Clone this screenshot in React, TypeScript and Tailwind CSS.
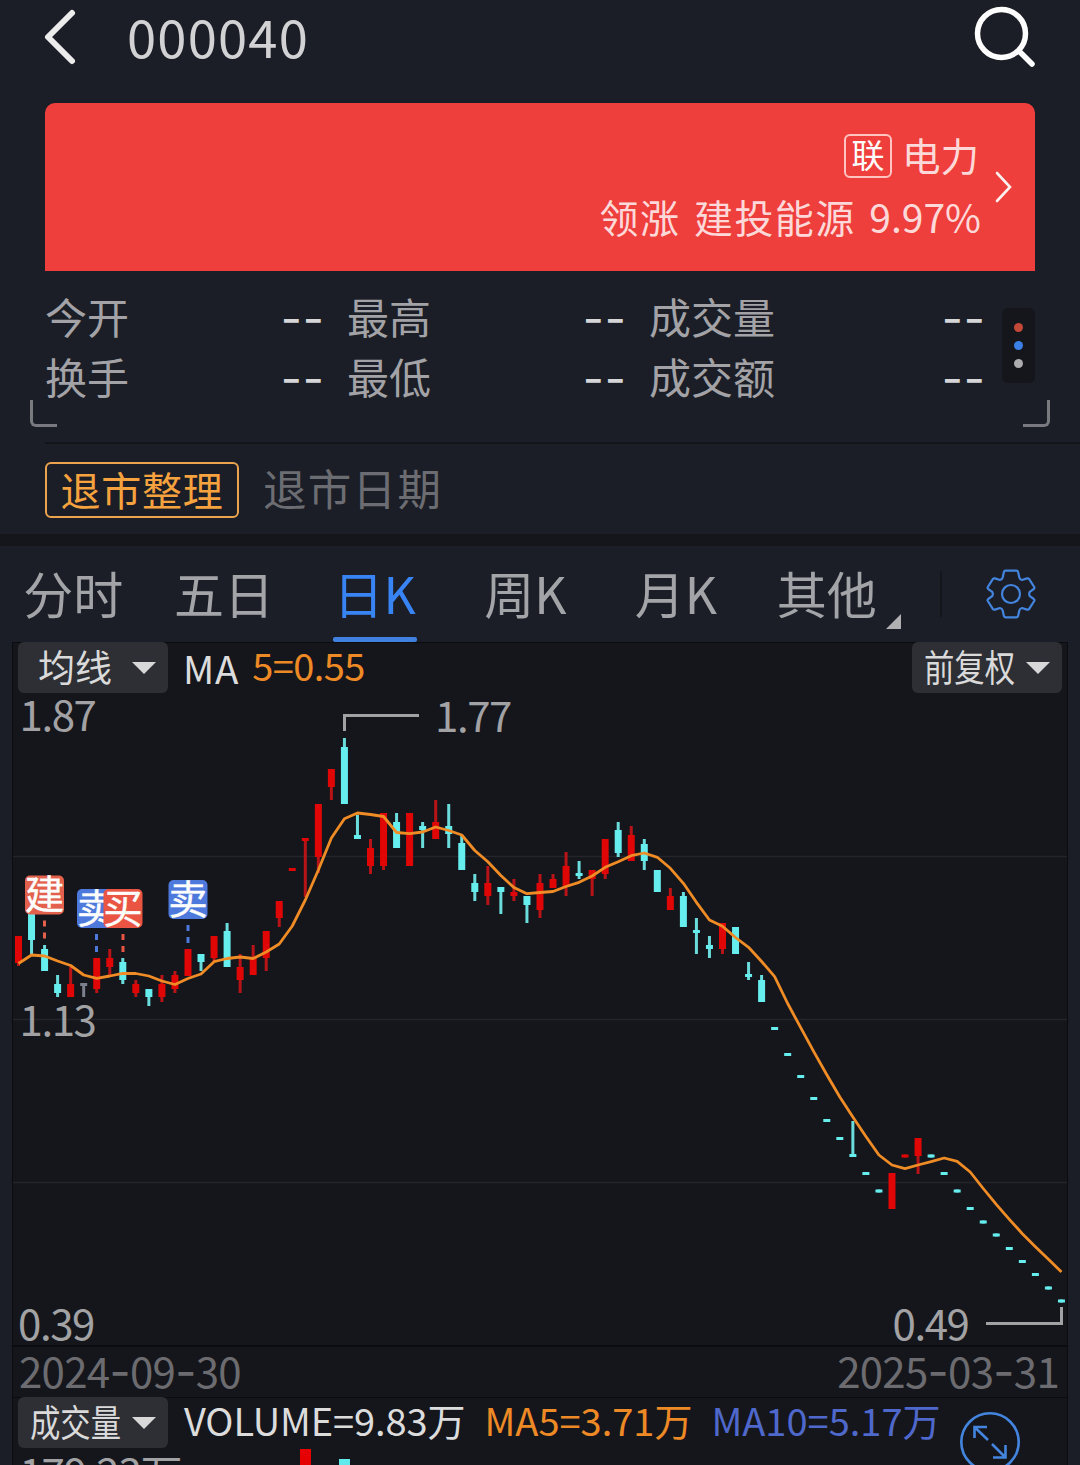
import React from "react";

type Tone = "up" | "down" | "flat";

// [tone, high, low, bodyTop, bodyBottom] in chart coordinates
type Candle = [Tone, number, number, number, number];

const candles: Candle[] = [
  ["up", 936, 966, 936, 963],
  ["down", 905, 954, 905, 940],
  ["down", 945, 971, 949, 971],
  ["down", 975, 997, 984, 993],
  ["up", 967, 997, 984, 997],
  ["flat", 983, 997, 983, 986],
  ["up", 958, 993, 958, 989],
  ["up", 949, 975, 958, 967],
  ["down", 958, 984, 962, 980],
  ["up", 980, 997, 984, 993],
  ["down", 989, 1006, 989, 997],
  ["up", 975, 1002, 984, 997],
  ["up", 971, 993, 975, 989],
  ["up", 949, 976, 949, 976],
  ["down", 954, 971, 954, 962],
  ["up", 936, 962, 936, 958],
  ["down", 923, 967, 931, 967],
  ["up", 954, 993, 967, 980],
  ["up", 945, 975, 958, 975],
  ["up", 931, 971, 931, 958],
  ["up", 901, 927, 901, 918],
  ["up", 868, 871, 868, 871],
  ["up", 838, 897, 838, 841],
  ["up", 804, 873, 804, 857],
  ["up", 769, 800, 769, 787],
  ["down", 738, 804, 747, 804],
  ["down", 815, 839, 835, 839],
  ["up", 839, 874, 848, 866],
  ["up", 813, 870, 813, 866],
  ["down", 813, 848, 822, 848],
  ["up", 813, 866, 813, 866],
  ["down", 822, 848, 826, 830],
  ["up", 800, 839, 822, 839],
  ["down", 804, 848, 826, 834],
  ["down", 835, 870, 843, 870],
  ["down", 874, 901, 883, 892],
  ["up", 866, 905, 883, 896],
  ["down", 887, 914, 887, 892],
  ["up", 879, 901, 892, 896],
  ["down", 896, 923, 896, 905],
  ["up", 874, 918, 883, 910],
  ["up", 874, 888, 879, 888],
  ["up", 852, 896, 866, 887],
  ["down", 861, 879, 873, 876],
  ["up", 870, 896, 870, 879],
  ["up", 839, 879, 839, 874],
  ["down", 822, 857, 830, 853],
  ["up", 826, 861, 835, 861],
  ["down", 839, 870, 844, 861],
  ["down", 870, 892, 870, 892],
  ["up", 888, 910, 896, 910],
  ["down", 892, 927, 896, 927],
  ["down", 918, 954, 930, 933],
  ["down", 936, 958, 945, 949],
  ["up", 923, 954, 923, 949],
  ["down", 927, 954, 927, 954],
  ["down", 962, 980, 974, 977],
  ["down", 975, 1002, 980, 1002],
  ["down", 1027, 1030, 1027, 1030],
  ["down", 1053, 1056, 1053, 1056],
  ["down", 1075, 1078, 1075, 1078],
  ["down", 1097, 1100, 1097, 1100],
  ["down", 1119, 1122, 1119, 1122],
  ["down", 1137, 1140, 1137, 1140],
  ["down", 1121, 1157, 1154, 1157],
  ["down", 1172, 1175, 1172, 1175],
  ["down", 1189.5, 1192.5, 1189.5, 1192.5],
  ["up", 1173, 1209, 1173, 1209],
  ["up", 1154.5, 1157.5, 1154.5, 1157.5],
  ["up", 1138, 1174, 1138, 1156],
  ["down", 1154.5, 1157.5, 1154.5, 1157.5],
  ["down", 1172, 1175, 1172, 1175],
  ["down", 1189.5, 1192.5, 1189.5, 1192.5],
  ["down", 1207, 1210, 1207, 1210],
  ["down", 1220.5, 1223.5, 1220.5, 1223.5],
  ["down", 1233.5, 1236.5, 1233.5, 1236.5],
  ["down", 1247, 1250, 1247, 1250],
  ["down", 1260, 1263, 1260, 1263],
  ["down", 1273, 1276, 1273, 1276],
  ["down", 1286.5, 1289.5, 1286.5, 1289.5],
  ["down", 1299.5, 1302.5, 1299.5, 1302.5],
];

const ma5 = [
  963.5, 955, 956, 961, 965.5, 975, 978.3, 976, 973.3, 973.5, 976, 981, 984.5,
  978.5, 974, 961.7, 958.5, 957, 958.5, 952, 944, 926, 900, 870, 838, 818.7,
  813, 814.5, 816.5, 832.5, 833.7, 832, 827, 830.5, 835, 850.5, 861.7, 875.5,
  887.5, 893.7, 892.5, 891.5, 886.5, 882.3, 876, 867.3, 861.7, 855.7, 853,
  857.3, 868.3, 883.3, 902.3, 920, 926.3, 937.5, 947.3, 961.5, 976.6, 1003.5,
  1027.7, 1051.7, 1074.7, 1097, 1117, 1136.5, 1155, 1165, 1168.7, 1165, 1161.7,
  1158, 1161.3, 1172, 1188.5, 1204.3, 1219.3, 1233.7, 1246.7, 1259.3, 1272,
];

const xAt = (i: number) => 18.5 + i * 13.037;

const bodyColors = { up: "#e00606", down: "#66eeee", flat: "#7c7f8c" };
const wickColors = { up: "#b81418", down: "#6adcdc", flat: "#7c7f8c" };

const trades = [
  { label: "建", x: 25, y: 875.5, line: 44.5, color: "#e2604c" },
  { label: "卖", x: 77, y: 889, line: 96.5, color: "#4d79dd" },
  { label: "买", x: 103.5, y: 889, line: 123, color: "#ea5443" },
  { label: "卖", x: 168.5, y: 880, line: 188, color: "#4d79dd" },
];

const stats = [
  ["今开", "最高", "成交量"],
  ["换手", "最低", "成交额"],
];

const tabs = ["分时", "五日", "日K", "周K", "月K", "其他"];

function Header() {
  return (
    <header className="flex h-[74px] items-center pr-[42px] pl-[42px]">
      <svg width="36" height="60" viewBox="42 7 36 60" fill="none">
        <path
          d="M72 13L48 37L72 61"
          stroke="#ececec"
          strokeWidth="6"
          strokeLinecap="round"
          strokeLinejoin="round"
        />
      </svg>
      <h1 className="ml-[49px] -mt-[4px] text-[52.5px] leading-[66px] tracking-[1.2px] text-[#d2d2d4]">
        000040
      </h1>
      <svg
        className="ml-auto"
        width="66"
        height="66"
        viewBox="972 4 66 66"
        fill="none"
        stroke="#ffffff"
      >
        <circle cx="1001.5" cy="33.5" r="24" strokeWidth="5.5" />
        <path d="M1019 51L1032 64" strokeWidth="5.5" strokeLinecap="round" />
      </svg>
    </header>
  );
}

function SectorCard() {
  return (
    <section className="mx-[45px] mt-[29px] flex h-[168px] items-center justify-end rounded-t-[10px] bg-[#ef3f3d] pr-[21px] text-[#ffd9d9]">
      <div className="flex flex-col items-end pb-[3px]">
        <div className="flex h-[60px] items-center gap-[10px]">
          <span className="flex h-[44px] w-[48px] items-center justify-center rounded-[6px] border-2 border-[#ffc4c2] text-[33px] leading-[36px] text-white">
            <span className="-mt-[3px]">联</span>
          </span>
          <span className="-mt-[3px] mr-[2px] text-[38.5px] leading-[56px]">
            电力
          </span>
        </div>
        <p className="h-[60px] text-[39px] leading-[60px] tracking-[1.4px] whitespace-pre [word-spacing:3.5px]">
          领涨 建投能源 <span className="tracking-normal">9.97%</span>
        </p>
      </div>
      <svg
        className="ml-[12px]"
        width="21"
        height="36"
        viewBox="993 169 21 36"
        fill="none"
      >
        <path
          d="M997 173L1010 187L997 201"
          stroke="#fff0f0"
          strokeWidth="2.6"
          strokeLinecap="round"
        />
      </svg>
    </section>
  );
}

function Stats() {
  return (
    <section className="flex h-[129px] items-start pt-[15px] pl-[45px]">
      <div className="flex w-[957px] flex-col">
        {stats.map((row) => (
          <div
            className="grid h-[60px] grid-cols-[302px_302px_353px] items-center text-[42px] leading-[60px] text-[#a3a3a7]"
            key={row[0]}
          >
            {row.map((label, i) => (
              <div className="flex justify-between" key={label}>
                <span>{label}</span>
                <span
                  className={`mt-[2px] font-[Inter] text-[46px] tracking-[1px] text-[#d6d6d8] ${
                    i === 2 ? "mr-[16px]" : "mr-[22px]"
                  }`}
                >
                  --
                </span>
              </div>
            ))}
          </div>
        ))}
      </div>
      <div className="mt-[22px] flex h-[75px] w-[33px] flex-col items-center justify-center gap-[9px] rounded-[6px] bg-[#15161b]">
        <span className="size-[9px] rounded-full bg-[#c24837]" />
        <span className="size-[9px] rounded-full bg-[#3b80e6]" />
        <span className="size-[9px] rounded-full bg-[#adadb0]" />
      </div>
    </section>
  );
}

function Notice() {
  return (
    <>
      <div className="flex h-[42px] justify-between px-[30px]">
        <span className="h-[27px] w-[27px] rounded-bl-[6px] border-b-3 border-l-3 border-[#797a80]" />
        <span className="h-[27px] w-[27px] rounded-br-[6px] border-r-3 border-b-3 border-[#797a80]" />
      </div>
      <div className="ml-[45px] h-[2px] bg-[#14151a]" />
      <section className="flex h-[90px] items-center pl-[45px]">
        <span className="mt-[2px] flex h-[56px] w-[194px] items-center justify-center rounded-[6px] border-2 border-[#eba34e] pb-[2px] text-[40px] leading-[50px] tracking-[0.8px] text-[#f5a23f]">
          退市整理
        </span>
        <span className="-mt-[2px] ml-[24px] text-[43.5px] leading-[60px] tracking-[1.3px] text-[#6c6d72]">
          退市日期
        </span>
      </section>
      <div className="h-[12px] bg-[#15161b]" />
    </>
  );
}

function Tabs() {
  return (
    <nav className="flex h-[96px] items-center">
      <div className="-ml-[2px] grid h-full w-[904px] grid-cols-6 text-[50px] leading-[93px] text-[#a3a4a8]">
        {tabs.map((tab) => (
          <div className="flex justify-center" key={tab}>
            {tab === "日K" ? (
              <div className="flex h-full w-[84px] flex-col text-center text-[#3884f5]">
                <span className="h-[91px]">{tab}</span>
                <span className="h-[5px] rounded-[2px] bg-[#4080df]" />
              </div>
            ) : (
              <span>{tab}</span>
            )}
            {tab === "其他" && (
              <svg
                className="mt-[68px] -mr-[24px] ml-[9px]"
                width="15"
                height="15"
              >
                <path d="M15 0V15H0Z" fill="#b0b0b3" />
              </svg>
            )}
          </div>
        ))}
      </div>
      <div className="ml-[38px] h-[46px] w-[2px] bg-[#15161b]" />
      <svg
        className="ml-[43px]"
        width="52"
        height="52"
        viewBox="-26 -26 52 52"
        fill="none"
        stroke="#4385de"
        strokeWidth="2.2"
        strokeLinejoin="round"
      >
        <path d="M-5.5 -23.3H5.5Q6.8 -23.3 7.1 -22L8.3 -16.5Q8.8 -14.5 11 -14L16 -15.6Q17.4 -16 18.2 -14.8L23.2 -7Q23.8 -5.9 22.8 -5L18.8 -2.2Q17.6 0 18.8 2.2L22.8 5Q23.8 5.9 23.2 7L18.2 14.8Q17.4 16 16 15.6L11 14Q8.8 14.5 8.3 16.5L7.1 22Q6.8 23.3 5.5 23.3H-5.5Q-6.8 23.3 -7.1 22L-8.3 16.5Q-8.8 14.5 -11 14L-16 15.6Q-17.4 16 -18.2 14.8L-23.2 7Q-23.8 5.9 -22.8 5L-18.8 2.2Q-17.6 0 -18.8 -2.2L-22.8 -5Q-23.8 -5.9 -23.2 -7L-18.2 -14.8Q-17.4 -16 -16 -15.6L-11 -14Q-8.8 -14.5 -8.3 -16.5L-7.1 -22Q-6.8 -23.3 -5.5 -23.3Z" />
        <circle r="9" />
      </svg>
    </nav>
  );
}

function Dropdown(props: { label: string }) {
  const long = props.label.length > 2;
  return (
    <button className="flex h-[51px] w-[150px] items-center justify-between rounded-[6px] bg-[#2e2f34] pr-[12px] pl-[12px] text-[37px] leading-[48px] whitespace-nowrap text-[#dadadb]">
      {long ? (
        <span className="-mt-[4px] w-[92px] origin-left scale-x-[0.82]">
          {props.label}
        </span>
      ) : (
        <span className="-mt-[4px] ml-[8px]">{props.label}</span>
      )}
      <svg width="24" height="12" className="shrink-0">
        <path d="M0 0H24L12 12Z" fill="#d8d8d9" />
      </svg>
    </button>
  );
}

function CandleChart() {
  return (
    <svg
      className="block"
      width="1054"
      height="652"
      viewBox="13 693 1054 652"
      fontSize="42"
    >
      {[856.5, 1019.5, 1182.5].map((y) => (
        <path key={y} d={`M13 ${y}H1067`} stroke="#24252a" strokeWidth="1.5" />
      ))}
      {candles.map(([tone, high, low, top, bottom], i) => (
        <g key={i}>
          <rect
            x={xAt(i) - 1.5}
            y={high}
            width="3"
            height={low - high}
            fill={wickColors[tone]}
          />
          <rect
            x={xAt(i) - 3.5}
            y={top}
            width="7"
            height={bottom - top}
            fill={bodyColors[tone]}
          />
        </g>
      ))}
      <polyline
        points={ma5.map((y, i) => `${xAt(i)},${y}`).join(" ")}
        fill="none"
        stroke="#f08c26"
        strokeWidth="2.8"
        strokeLinejoin="round"
      />
      {trades.map((trade) => (
        <g key={trade.x}>
          <path
            d={`M${trade.line} ${trade.y + 45}v6m0 6v6`}
            stroke={trade.color}
            strokeWidth="3"
          />
          <rect
            x={trade.x}
            y={trade.y}
            width="39"
            height="39"
            rx="5"
            fill={trade.color}
          />
          <text
            x={trade.x + 19.5}
            y={trade.y + 33.5}
            fontSize="39.5"
            textAnchor="middle"
            fill="#ffffff"
            stroke="#ffffff"
            strokeWidth="0.4"
          >
            {trade.label}
          </text>
        </g>
      ))}
      <g fill="#a2a2a5" letterSpacing="-1.4">
        <text x="19.5" y="731">
          1.87
        </text>
        <text x="435" y="731.5">
          1.77
        </text>
        <text x="19.5" y="1036">
          1.13
        </text>
        <text x="18" y="1340">
          0.39
        </text>
        <text x="892.5" y="1340">
          0.49
        </text>
      </g>
      <g fill="none" stroke="#a2a2a5" strokeWidth="3">
        <path d="M344.5 731V715.5H419" />
        <path d="M986 1323.5H1061.5V1307" />
      </g>
    </svg>
  );
}

function DateLabel(props: { date: string }) {
  const [year, month, day] = props.date.split("-");
  const dash = <span className="font-[Inter] text-[46px]">-</span>;
  return (
    <span className="-mt-[3px] leading-[50px] tracking-[-0.7px]">
      {year}
      {dash}
      {month}
      {dash}
      {day}
    </span>
  );
}

export default function App() {
  return (
    <div className="flex h-[1465px] w-[1080px] flex-col overflow-hidden bg-[#1b1e26] font-['Noto_Sans_CJK_SC',sans-serif]">
      <Header />
      <SectorCard />
      <Stats />
      <Notice />
      <Tabs />
      <main className="mx-[12px] flex grow flex-col border-x border-[#0b0c10] bg-[#15161b]">
        <div className="flex h-[51px] items-center pr-[5px] pl-[5px] shadow-[inset_0_1px_0_#0b0c10]">
          <Dropdown label="均线" />
          <span className="-mt-[2px] ml-[15px] text-[38.5px] leading-[50px] tracking-[0.8px] text-[#dcdcdd]">
            MA
          </span>
          <span className="-mt-[5px] ml-[13px] text-[38px] leading-[50px] tracking-[-0.6px] text-[#ee8a26]">
            5=0.55
          </span>
          <div className="ml-auto">
            <Dropdown label="前复权" />
          </div>
        </div>
        <CandleChart />
        <div className="flex h-[52px] items-center justify-between border-t-2 border-[#0b0c10] pr-[8px] pl-[6px] text-[42px] text-[#6c6c70]">
          <DateLabel date="2024-09-30" />
          <DateLabel date="2025-03-31" />
        </div>
        <div className="relative flex h-[51px] items-center pl-[5px] text-[38px] leading-[50px] whitespace-nowrap shadow-[inset_0_1px_0_#0b0c10]">
          <Dropdown label="成交量" />
          <span className="-mt-[5px] ml-[16px] tracking-[-0.1px] text-[#dcdcdd]">
            VOLUME=9.83万
          </span>
          <span className="-mt-[5px] ml-[19px] text-[#ee8a26]">
            MA5=3.71万
          </span>
          <span className="-mt-[5px] ml-[19px] text-[#4f68cc]">
            MA10=5.17万
          </span>
          <svg
            className="absolute top-[13px] left-[945px]"
            width="64"
            height="64"
            viewBox="958 1410 64 64"
            fill="none"
            stroke="#4385de"
            strokeWidth="2.6"
          >
            <circle cx="990" cy="1442" r="28.7" />
            <path d="M974.5 1438V1427H987M975 1427.5L988 1440M992 1444L1005 1457M993 1457.5H1005.5V1445" />
          </svg>
        </div>
        <svg
          className="block"
          width="1054"
          height="17"
          viewBox="13 1448 1054 17"
          fontSize="42"
        >
          <rect x="300" y="1449" width="11" height="16" fill="#e60000" />
          <rect x="339" y="1459" width="11" height="6" fill="#5eeaea" />
          <text x="19.5" y="1489.5" fill="#a2a2a5" letterSpacing="-1.2">
            179.23万
          </text>
        </svg>
      </main>
    </div>
  );
}
